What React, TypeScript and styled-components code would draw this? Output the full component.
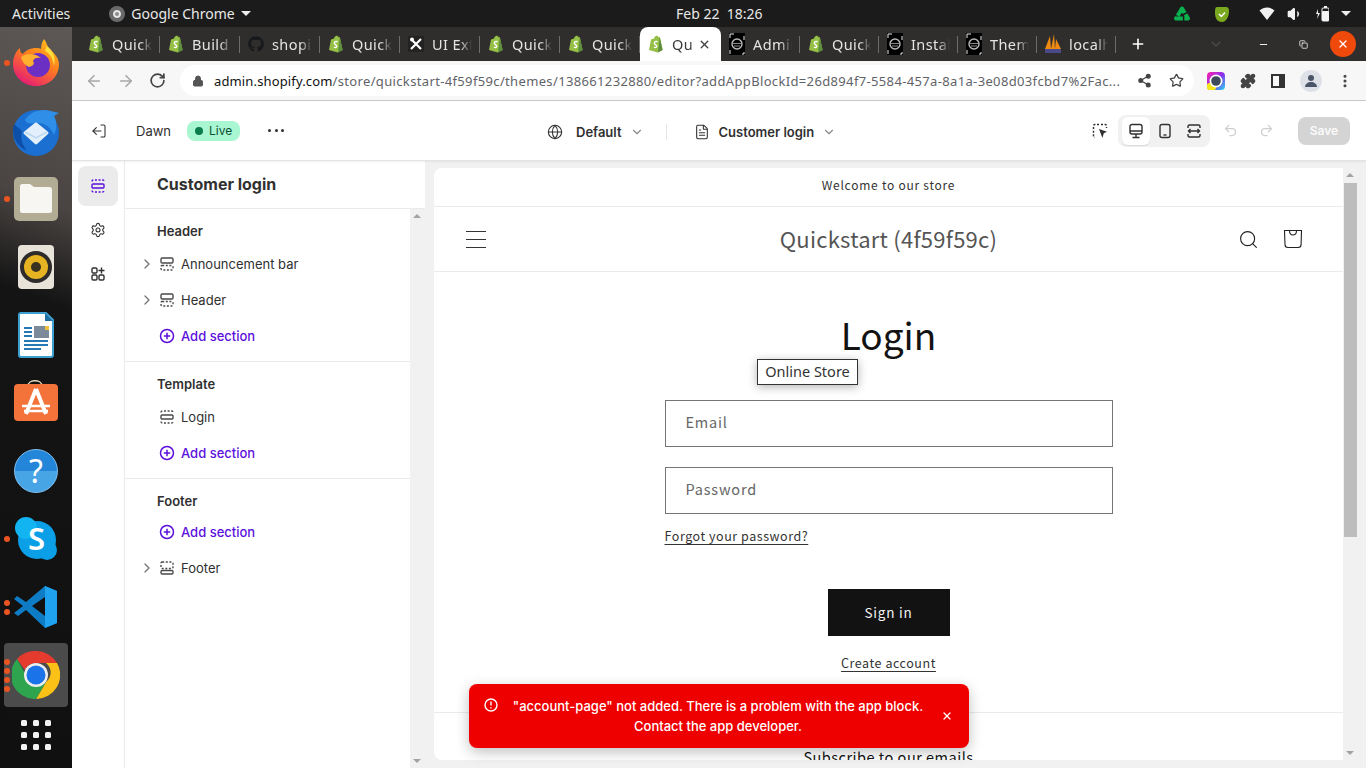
import React from 'react';
import styled, { createGlobalStyle } from 'styled-components';
import { FaGithub } from 'react-icons/fa';
import {
  ArrowLeft,
  ArrowRight,
  ChevronDown,
  ChevronRight,
  Copy,
  EllipsisVertical,
  FileText,
  Globe,
  Lock,
  LogOut,
  Minus,
  Plus,
  Puzzle,
  Redo2,
  RotateCw,
  Search,
  Settings,
  Share2,
  Star,
  Undo2,
  Volume1,
  X,
} from 'lucide-react';

type SectionKind = 'top' | 'middle' | 'bottom';

const GlobalStyle = createGlobalStyle`
  html, body { margin: 0; padding: 0; overflow: hidden; }
  * { box-sizing: border-box; }
  body { font-family: 'Inter', 'Liberation Sans', sans-serif; }
`;

const UBUNTU = `'Noto Sans', 'Open Sans', sans-serif`;
const STORE = `'Noto Sans CJK JP', 'Noto Sans', sans-serif`;

const ShopifyIcon = () => (
  <svg width='16' height='18' viewBox='0 0 16 18'>
    <path d='M1 15 3 4.5 6 3.4C6.6 1.6 7.6.8 8.6.8c1 0 1.6.7 2 1.4l1.2-.2L14.6 15 9.6 17.4Z' fill='#95bf47' />
    <path d='M11.8 2 14.6 15 10 17.4Z' fill='#5e8e3e' />
    <path d='M9.6 6.7C8 6 6.2 6.8 6.4 8.3c.2 1.4 2.4 1.6 2.4 3 0 1.2-1.6 1.5-2.8.8' fill='none' stroke='#fff' strokeWidth='1.4' />
  </svg>
);

const ThemeFavicon = () => (
  <svg width='16' height='22' viewBox='0 0 16 22'>
    <rect width='16' height='22' fill='#000' />
    <path d='M1 1h14v20H1Z' fill='none' stroke='#e8e8e8' strokeWidth='1' strokeDasharray='4 12' />
    <circle cx='8' cy='11' r='5' fill='none' stroke='#bbb' strokeWidth='1.4' />
    <path d='M4 10.5h8M5 13h6' stroke='#888' strokeWidth='1.2' />
  </svg>
);

const ToolsFavicon = () => (
  <svg width='16' height='16' viewBox='0 0 16 16'>
    <rect width='16' height='16' fill='#222' />
    <path d='M3 3l10 10M13 3 3 13' stroke='#fff' strokeWidth='2.2' />
    <circle cx='4' cy='3.5' r='2' fill='#fff' />
  </svg>
);

const LocalFavicon = () => (
  <svg width='16' height='20' viewBox='0 0 16 20'>
    <path d='M0 15 5 2l1 13ZM6 15 9 0l1 15ZM10 15l1-10 5 10Z' fill='#ee8a12' />
    <rect y='15' width='16' height='4' fill='#4a4a8a' />
  </svg>
);

const tabs: { label: string; icon: React.ReactNode; active?: boolean; narrow?: boolean }[] = [
  { label: 'Quick', icon: <ShopifyIcon /> },
  { label: 'Build', icon: <ShopifyIcon /> },
  { label: 'shopify', icon: <FaGithub size={16} color='#17191c' /> },
  { label: 'Quick', icon: <ShopifyIcon /> },
  { label: 'UI Ext', icon: <ToolsFavicon /> },
  { label: 'Quick', icon: <ShopifyIcon /> },
  { label: 'Quick', icon: <ShopifyIcon /> },
  { label: 'Qu', icon: <ShopifyIcon />, active: true },
  { label: 'Admin', icon: <ThemeFavicon />, narrow: true },
  { label: 'Quick', icon: <ShopifyIcon />, narrow: true },
  { label: 'Install', icon: <ThemeFavicon />, narrow: true },
  { label: 'Theme', icon: <ThemeFavicon />, narrow: true },
  { label: 'localhost', icon: <LocalFavicon />, narrow: true },
];

const FirefoxIcon = () => (
  <svg width='50' height='50' viewBox='0 0 50 50'>
    <defs>
      <linearGradient id='ffBody' x1='0.8' y1='0' x2='0.2' y2='1'>
        <stop offset='0' stopColor='#ffc11d' />
        <stop offset='0.45' stopColor='#ff7a20' />
        <stop offset='1' stopColor='#e3137d' />
      </linearGradient>
    </defs>
    <path d='M33 1c3 4 3 7 5 9 5 5 10 10 10 16 0 13-10 22-23 22S2 38 2 26C2 18 6 12 9 10c0 4 1 5 3 6 3-4 8-6 13-6 2 0 4 0 5 1 0-4 1-7 3-10Z' fill='url(#ffBody)' />
    <circle cx='27' cy='27' r='12' fill='#6b2fc4' />
    <path d='M10 19c5-4 14-4 20 1-4-1-7 0-8 3 2 3 0 5-4 6-4-2-7-5-8-10Z' fill='#ffb02e' />
    <path d='M36 8c6 5 9 12 7 20-1-7-3-12-9-15Z' fill='#ffdf3c' />
  </svg>
);

const ThunderbirdIcon = () => (
  <svg width='50' height='50' viewBox='0 0 50 50'>
    <circle cx='25' cy='27' r='23' fill='#1a6fd1' />
    <path d='M14 14c5-9 17-12 26-9l8 2-5 3c3 5 3 13 0 19-3-8-11-13-19-12-4 0-7 2-10-3Z' fill='#2f8fe8' />
    <path d='M3 18c-3 10 1 21 13 27-5-7-7-13-5-20Z' fill='#0d4fa8' />
    <path d='M14 27l11-9 11 9-11 10Z' fill='#e3effb' stroke='#e3effb' strokeWidth='3' strokeLinejoin='round' />
    <path d='M14 26l11 6 11-6' fill='none' stroke='#b9d6f3' strokeWidth='1.5' />
  </svg>
);

const FilesIcon = () => (
  <svg width='46' height='46' viewBox='0 0 46 46'>
    <rect x='1' y='1' width='44' height='44' rx='5' fill='#b3ac95' />
    <path d='M7 10c0-1 1-2 2-2h8l4 3h15c2 0 3 1 3 3v21c0 1-1 2-3 2H9c-1 0-2-1-2-2Z' fill='#f8f6f3' />
  </svg>
);

const RhythmboxIcon = () => (
  <svg width='38' height='46' viewBox='0 0 38 46'>
    <rect x='1' y='1' width='36' height='44' rx='4' fill='#e7e3d8' />
    <circle cx='19' cy='23' r='16' fill='#2e2c2b' />
    <circle cx='19' cy='23' r='12' fill='#e6b422' />
    <circle cx='19' cy='23' r='5' fill='#3a3220' />
  </svg>
);

const WriterIcon = () => (
  <svg width='38' height='46' viewBox='0 0 38 46'>
    <path d='M2 3c0-1 1-2 2-2h25l7 7v35c0 1-1 2-2 2H4c-1 0-2-1-2-2Z' fill='#fff' stroke='#3f9fd0' strokeWidth='2' />
    <path d='M28 1l8 8h-8Z' fill='#1d6f9f' />
    <path d='M7 16h8M7 20h8M7 24h8M7 29h24M7 33h24M7 37h17' stroke='#2678b4' strokeWidth='2' />
    <rect x='17' y='14' width='15' height='12' fill='#7d8a99' />
    <rect x='28' y='14' width='4' height='4' fill='#f0c040' />
  </svg>
);

const StoreIcon = () => (
  <svg width='46' height='46' viewBox='0 3 46 46'>
    <path d='M15 9c0-7 14-7 14 0' fill='none' stroke='#e6d4b8' strokeWidth='1.6' />
    <rect x='1' y='7' width='44' height='37' rx='4' fill='#f3733a' />
    <path d='M23 12 13 37M23 12l10 25' stroke='#fff' strokeWidth='4' fill='none' />
    <path d='M9 29h28M11 34h24' stroke='#fff' strokeWidth='2.4' />
  </svg>
);

const HelpIcon = () => <HelpBall>?</HelpBall>;

const SkypeIcon = () => (
  <SkypeBall>
    <svg width='44' height='44' viewBox='0 0 44 44' fill='#0a9fe6'>
      <circle cx='23' cy='23' r='19' />
      <circle cx='12' cy='11' r='11' fill='#12b4f2' />
      <circle cx='33' cy='33' r='10' />
    </svg>
    <SkypeLetter>S</SkypeLetter>
  </SkypeBall>
);

const ChromeIcon = () => (
  <svg width='48' height='48' viewBox='0 0 48 48'>
    <path d='M24 0a24 24 0 0 1 21 12H24a12 12 0 0 0-11 7L5 8a24 24 0 0 1 19-8Z' fill='#e53a2e' />
    <path d='M45 12a24 24 0 0 1-21 36l10-17a12 12 0 0 0 0-19Z' fill='#fbc116' />
    <path d='M5 8l9 16a12 12 0 0 0 20 7L24 48A24 24 0 0 1 5 8Z' fill='#2ea44f' />
    <circle cx='24' cy='24' r='12' fill='#eee' />
    <circle cx='24' cy='24' r='9.5' fill='#1a73e8' />
  </svg>
);

const VsCodeIcon = () => (
  <svg width='44' height='44' viewBox='0 0 44 44'>
    <path d='M31 1 43 6v32l-12 5L12 25 4 31 0 28l9-7-9-7 3-3 9 6Z' fill='#0d7cc4' />
    <path d='M31 1 43 6v32l-12 5Z' fill='#1fa3f0' />
    <path d='M31 12 18 21l13 10Z' fill='#111' />
  </svg>
);

const GridIcon = () => (
  <svg width='30' height='30' viewBox='0 0 30 30'>
    {[0, 12, 24].map((y) =>
      [0, 12, 24].map((x) => <rect key={`${x}-${y}`} x={x} y={y} width='6' height='6' rx='1.5' fill='#f2f2f2' />),
    )}
  </svg>
);

const dockItems: { icon: React.ReactNode; dots: number; active?: boolean; short?: boolean }[] = [
  { icon: <FirefoxIcon />, dots: 1 },
  { icon: <ThunderbirdIcon />, dots: 0 },
  { icon: <FilesIcon />, dots: 1 },
  { icon: <RhythmboxIcon />, dots: 0 },
  { icon: <WriterIcon />, dots: 0 },
  { icon: <StoreIcon />, dots: 0 },
  { icon: <HelpIcon />, dots: 0 },
  { icon: <SkypeIcon />, dots: 1 },
  { icon: <VsCodeIcon />, dots: 2 },
  { icon: <ChromeIcon />, dots: 4, active: true },
  { icon: <GridIcon />, dots: 0, short: true },
];

// admin section glyph, the solid band moves with the kind of section
const SectionIcon = ({ kind, color = '#4a4a4a' }: { kind: SectionKind; color?: string }) => (
  <svg width='16' height='16' viewBox='0 0 16 16' fill='none' stroke={color} strokeWidth='1.4'>
    {kind === 'top' && (
      <>
        <rect x='2' y='2' width='12' height='5' rx='1.2' />
        <rect x='2' y='9.5' width='12' height='4.5' rx='1.2' strokeDasharray='2 1.6' />
      </>
    )}
    {kind === 'middle' && (
      <>
        <path d='M2 3.5c0-1 .5-1.5 1.5-1.5h9c1 0 1.5.5 1.5 1.5' strokeDasharray='2 1.6' />
        <rect x='2' y='6' width='12' height='4' rx='1' />
        <path d='M2 12.5c0 1 .5 1.5 1.5 1.5h9c1 0 1.5-.5 1.5-1.5' strokeDasharray='2 1.6' />
      </>
    )}
    {kind === 'bottom' && (
      <>
        <rect x='2' y='2' width='12' height='6.5' rx='1.2' strokeDasharray='2 1.6' />
        <rect x='2' y='10.5' width='12' height='3.5' rx='1.2' />
      </>
    )}
  </svg>
);

const AddIcon = () => (
  <svg width='16' height='16' viewBox='0 0 16 16' fill='none' stroke='#5c10dc' strokeWidth='1.5'>
    <circle cx='8' cy='8' r='6.5' />
    <path d='M8 4.8v6.4M4.8 8h6.4' />
  </svg>
);

const AppsIcon = () => (
  <svg width='16' height='16' viewBox='0 0 16 16' fill='none' stroke='#303030' strokeWidth='1.4'>
    <rect x='2' y='2' width='5' height='5' rx='1.2' />
    <rect x='2' y='9' width='5' height='5' rx='1.2' />
    <rect x='9' y='9' width='5' height='5' rx='1.2' />
    <path d='M11.5 1.5v6M8.5 4.5h6' />
  </svg>
);

const InspectIcon = () => (
  <svg width='16' height='16' viewBox='0 0 16 16' fill='none'>
    <path d='M7 1.5H3c-1 0-1.5.5-1.5 1.5v10c0 1 .5 1.5 1.5 1.5M9 1.5h4c1 0 1.5.5 1.5 1.5v2' stroke='#303030' strokeWidth='1.4' strokeDasharray='2 1.6' />
    <path d='M7 6l8 2.8-3.2 1.4L10.4 15Z' fill='#303030' />
  </svg>
);

const DesktopIcon = () => (
  <svg width='16' height='16' viewBox='0 0 16 16' fill='none' stroke='#303030' strokeWidth='1.4'>
    <rect x='2' y='1.5' width='12' height='9.5' rx='2' />
    <path d='M2 8h12M8 11v3M4.5 14.5h7' />
  </svg>
);

const MobileIcon = () => (
  <svg width='16' height='16' viewBox='0 0 16 16' fill='none' stroke='#303030' strokeWidth='1.4'>
    <rect x='3' y='1.5' width='10' height='13' rx='2' />
    <path d='M6.5 12h3' />
  </svg>
);

const FullIcon = () => (
  <svg width='16' height='16' viewBox='0 0 16 16' fill='none' stroke='#303030' strokeWidth='1.4'>
    <path d='M2 5V3.5c0-1 .5-1.5 1.5-1.5h9c1 0 1.5.5 1.5 1.5V5M2 11v1.5c0 1 .5 1.5 1.5 1.5h9c1 0 1.5-.5 1.5-1.5V11' />
    <path d='M2 8h12M4.5 6 2.5 8l2 2M11.5 6l2 2-2 2' />
  </svg>
);

const CartIcon = () => (
  <svg width='20' height='20' viewBox='0 0 20 20' fill='none' stroke='#222' strokeWidth='1.1'>
    <path d='M1.5 1.5h17l-.4 14c0 2-1 3-3 3H5c-2 0-3-1-3-3Z' />
    <path d='M6.5 1.5c0 6 7 6 7 0' />
  </svg>
);

const ColorExtIcon = () => (
  <svg width='18' height='18' viewBox='0 0 18 18'>
    <defs>
      <linearGradient id='extRing' x1='0' y1='0' x2='1' y2='1'>
        <stop offset='0' stopColor='#ff1fa8' />
        <stop offset='0.5' stopColor='#8a2ff0' />
        <stop offset='1' stopColor='#25d6f0' />
      </linearGradient>
    </defs>
    <rect width='18' height='18' rx='4' fill='url(#extRing)' />
    <rect x='0' y='11' width='9' height='7' rx='2' fill='#f3e61c' />
    <circle cx='9' cy='9' r='6.5' fill='#fff' />
    <circle cx='9' cy='9' r='4.8' fill='#3d4a5c' />
  </svg>
);

const App = () => (
  <Screen>
    <GlobalStyle />
    <TopBar>
      <TopLeft>
        <span>Activities</span>
        <AppMenu>
          <ChromeGlyph />
          Google Chrome
          <Caret />
        </AppMenu>
      </TopLeft>
      <Clock>Feb 22&nbsp;&nbsp;18:26</Clock>
      <Tray>
        <svg width='18' height='18' viewBox='0 0 18 18' fill='none' stroke='#0bb04f' strokeWidth='4'>
          <path d='M9 3.5 3 13.5h12Z' strokeLinejoin='round' strokeDasharray='8.5 1.5' />
        </svg>
        <svg width='14' height='16' viewBox='0 0 14 16'>
          <path d='M2 1h9c2 0 3 1 3 4 0 6-3 11-7 11-5 0-7-4-7-9 0-3 0-6 2-6Z' fill='#7aa81e' />
          <path d='M4 8l2.4 2.4L10 6.4' stroke='#fff' strokeWidth='1.5' fill='none' />
        </svg>
        <TrayGroup>
          <svg width='16' height='14' viewBox='0 0 16 14' fill='none'>
            <path d='M0.5 3.5C5 -0.5 11 -0.5 15.5 3.5L8 13Z' fill='#f2f2f2' />
          </svg>
          <Volume1 size={16} color='#f2f2f2' fill='#f2f2f2' />
          <svg width='14' height='16' viewBox='0 0 14 16' fill='none'>
            <path d='M3 3 1 8h2l-1 5 3-6H3Z' fill='#f2f2f2' />
            <rect x='7' y='2' width='7' height='13' rx='1' stroke='#f2f2f2' />
            <rect x='7' y='5' width='7' height='10' rx='1' fill='#f2f2f2' />
            <rect x='9' y='0' width='3' height='2' fill='#f2f2f2' />
          </svg>
          <Caret />
        </TrayGroup>
      </Tray>
    </TopBar>
    <Desktop>
      <Dock>
        {dockItems.map((item, i) => (
          <DockItem key={i} $active={item.active} $short={item.short}>
            {item.dots > 0 && (
              <DockDots>
                {Array.from({ length: item.dots }).map((_, d) => (
                  <DockDot key={d} />
                ))}
              </DockDots>
            )}
            {item.icon}
          </DockItem>
        ))}
      </Dock>
      <Browser>
        <TabStrip>
          {tabs.map((tab, i) => (
            <Tab key={i} $active={tab.active} $narrow={tab.narrow}>
              <Favicon>{tab.icon}</Favicon>
              <TabLabel $active={tab.active}>{tab.label}</TabLabel>
              {tab.active && <X size={13} color='#444' strokeWidth={2.6} />}
            </Tab>
          ))}
          <NewTab>
            <Plus size={16} color='#fff' strokeWidth={2.4} />
          </NewTab>
          <WindowControls>
            <TabSearch>
              <ChevronDown size={16} color='#4a4a4a' />
            </TabSearch>
            <WindowButton>
              <Minus size={11} color='#fff' />
            </WindowButton>
            <WindowButton>
              <Copy size={9} color='#fff' />
            </WindowButton>
            <CloseButton>
              <X size={12} color='#fff' strokeWidth={2.6} />
            </CloseButton>
          </WindowControls>
        </TabStrip>
        <UrlBar>
          <NavButtons>
            <ArrowLeft size={18} color='#a8a8a8' strokeWidth={2.2} />
            <ArrowRight size={18} color='#a8a8a8' strokeWidth={2.2} />
            <RotateCw size={17} color='#444' strokeWidth={2.4} />
          </NavButtons>
          <Omnibox>
            <Lock size={12} color='#555' fill='#555' />
            <UrlText>
              <strong>admin.shopify.com</strong>/store/quickstart-4f59f59c/themes/138661232880/editor?addAppBlockId=26d894f7-5584-457a-8a1a-3e08d03fcbd7%2Fac...
            </UrlText>
            <Share2 size={15} color='#444' fill='#444' />
            <Star size={15} color='#444' strokeWidth={2} />
          </Omnibox>
          <ExtButtons>
            <ColorExtIcon />
            <Puzzle size={16} color='#444' fill='#444' />
            <PanelGlyph />
            <Avatar>
              <svg width='14' height='14' viewBox='0 0 14 14'>
                <circle cx='7' cy='4' r='3' fill='#4a5568' />
                <path d='M1 13c0-3 3-5 6-5s6 2 6 5Z' fill='#4a5568' />
              </svg>
            </Avatar>
            <EllipsisVertical size={16} color='#444' strokeWidth={2.6} />
          </ExtButtons>
        </UrlBar>
        <EditorBar>
          <EditorLeft>
            <ExitIcon>
              <LogOut size={16} color='#303030' strokeWidth={1.6} />
            </ExitIcon>
            <ThemeName>Dawn</ThemeName>
            <LivePill>
              <LiveDot />
              Live
            </LivePill>
            <MoreDots>
              <i />
              <i />
              <i />
            </MoreDots>
          </EditorLeft>
          <EditorCenter>
            <Globe size={16} color='#303030' strokeWidth={1.6} />
            <PickerText>Default</PickerText>
            <ChevronDown size={14} color='#8a8a8a' />
            <PickerDivider />
            <FileText size={16} color='#303030' strokeWidth={1.6} />
            <PickerText $near>Customer login</PickerText>
            <ChevronDown size={14} color='#8a8a8a' />
          </EditorCenter>
          <EditorRight>
            <InspectIcon />
            <DeviceGroup>
              <DeviceButton $active>
                <DesktopIcon />
              </DeviceButton>
              <DeviceButton>
                <MobileIcon />
              </DeviceButton>
              <DeviceButton>
                <FullIcon />
              </DeviceButton>
            </DeviceGroup>
            <HistoryButtons>
              <Undo2 size={15} color='#cfcfcf' />
              <Redo2 size={15} color='#cfcfcf' />
            </HistoryButtons>
            <SaveButton>Save</SaveButton>
          </EditorRight>
        </EditorBar>
        <Workspace>
          <Rail>
            <RailButton $active>
              <SectionIcon kind='middle' color='#5c10dc' />
            </RailButton>
            <RailButton>
              <Settings size={16} color='#303030' strokeWidth={1.6} />
            </RailButton>
            <RailButton>
              <AppsIcon />
            </RailButton>
          </Rail>
          <Panel>
            <PanelTitle>Customer login</PanelTitle>
            <PanelBody>
              <SectionList>
                <Section>
                  <SectionLabel>Header</SectionLabel>
                  <Row>
                    <RowChevron size={16} color='#777' />
                    <SectionIcon kind='top' />
                    <RowText>Announcement bar</RowText>
                  </Row>
                  <Row>
                    <RowChevron size={16} color='#777' />
                    <SectionIcon kind='top' />
                    <RowText>Header</RowText>
                  </Row>
                  <Row>
                    <span />
                    <AddIcon />
                    <AddText>Add section</AddText>
                  </Row>
                </Section>
                <Section>
                  <SectionLabel>Template</SectionLabel>
                  <Row>
                    <span />
                    <SectionIcon kind='middle' />
                    <RowText>Login</RowText>
                  </Row>
                  <Row>
                    <span />
                    <AddIcon />
                    <AddText>Add section</AddText>
                  </Row>
                </Section>
                <Section $last>
                  <SectionLabel $tight>Footer</SectionLabel>
                  <Row>
                    <span />
                    <AddIcon />
                    <AddText>Add section</AddText>
                  </Row>
                  <Row>
                    <RowChevron size={16} color='#777' />
                    <SectionIcon kind='bottom' />
                    <RowText>Footer</RowText>
                  </Row>
                </Section>
              </SectionList>
              <Scrollbar>
                <ScrollUp />
                <ScrollDown />
              </Scrollbar>
            </PanelBody>
          </Panel>
          <Preview>
            <StoreCard>
              <Store>
                <Announcement>Welcome to our store</Announcement>
                <StoreHeader>
                  <MenuLines>
                    <i />
                    <i />
                    <i />
                  </MenuLines>
                  <StoreName>Quickstart (4f59f59c)</StoreName>
                  <StoreActions>
                    <Search size={21} color='#222' strokeWidth={1.3} />
                    <CartIcon />
                  </StoreActions>
                </StoreHeader>
                <LoginTitle>Login</LoginTitle>
                <Field>Email</Field>
                <Field>Password</Field>
                <ForgotRow>
                  <StoreLink>Forgot your password?</StoreLink>
                </ForgotRow>
                <SignIn>Sign in</SignIn>
                <CreateAccount>Create account</CreateAccount>
                <FooterLine />
                <Subscribe>Subscribe to our emails</Subscribe>
              </Store>
              <StoreScroll>
                <ScrollUp />
                <ScrollThumb />
                <ScrollDown />
              </StoreScroll>
            </StoreCard>
          </Preview>
        </Workspace>
      </Browser>
    </Desktop>
    <Tooltip>Online Store</Tooltip>
    <Toast>
      <svg width='14' height='14' viewBox='0 0 14 14' fill='none' stroke='#fff' strokeWidth='1.4'>
        <circle cx='7' cy='7' r='6' />
        <path d='M7 3.5v4M7 9.2v1.4' />
      </svg>
      <ToastText>
        "account-page" not added. There is a problem with the app block.
        <br />
        Contact the app developer.
      </ToastText>
      <X size={12} color='#fff' strokeWidth={2.4} />
    </Toast>
  </Screen>
);

const Screen = styled.div`
  position: relative;
  width: 1366px;
  height: 768px;
  overflow: hidden;
  display: flex;
  flex-direction: column;
`;

const TopBar = styled.header`
  height: 27px;
  flex: none;
  background: #1b1b1b;
  color: #e8e8e8;
  font-family: ${UBUNTU};
  font-size: 14px;
  display: grid;
  grid-template-columns: 664px auto 1fr;
  align-items: center;
  padding: 0 12px;
`;

const TopLeft = styled.div`
  display: flex;
  align-items: center;
  gap: 39px;
`;

const AppMenu = styled.div`
  display: flex;
  align-items: center;
  gap: 6px;
`;

const ChromeGlyph = styled.span`
  width: 16px;
  height: 16px;
  border-radius: 50%;
  background: #8a8a8a;
  border: 4px solid #6a6a6a;
  box-shadow: inset 0 0 0 2px #e8e8e8;
`;

const Caret = styled.span`
  width: 0;
  height: 0;
  border-left: 5px solid transparent;
  border-right: 5px solid transparent;
  border-top: 5px solid #eee;
`;

const Clock = styled.div`
  white-space: nowrap;
`;

const Tray = styled.div`
  display: flex;
  align-items: center;
  justify-content: flex-end;
  gap: 24px;
  padding-right: 3px;
`;

const TrayGroup = styled.div`
  display: flex;
  align-items: center;
  gap: 12px;
  margin-left: 6px;
`;

const Desktop = styled.div`
  flex: 1;
  min-height: 0;
  display: flex;
`;

const Dock = styled.aside`
  width: 72px;
  flex: none;
  padding-top: 2px;
  background: linear-gradient(200deg, #5d5856 0%, #4a4543 24%, #141414 37%, #101010 100%);
  display: flex;
  flex-direction: column;
`;

const DockItem = styled.div<{ $active?: boolean; $short?: boolean }>`
  position: relative;
  height: ${(p) => (p.$short ? 52 : 68)}px;
  flex: none;
  display: flex;
  align-items: center;
  justify-content: center;
  &::before {
    content: '';
    position: absolute;
    left: 4px;
    right: 4px;
    top: 2px;
    bottom: 2px;
    border-radius: 4px;
    background: ${(p) => (p.$active ? '#4b4b4b' : 'transparent')};
  }
  > svg {
    position: relative;
  }
`;

const DockDots = styled.div`
  position: absolute;
  left: 4px;
  top: 0;
  bottom: 0;
  display: flex;
  flex-direction: column;
  justify-content: center;
  gap: 3px;
`;

const DockDot = styled.span`
  width: 6px;
  height: 6px;
  border-radius: 50%;
  background: #e95420;
`;

const HelpBall = styled.div`
  width: 44px;
  height: 44px;
  border-radius: 50%;
  background: linear-gradient(#2486d8 50%, #47a5e6 50%);
  border: 1px solid #7fc0ee;
  color: #fff;
  font-family: ${UBUNTU};
  font-size: 32px;
  line-height: 42px;
  text-align: center;
`;

const SkypeBall = styled.div`
  position: relative;
  width: 44px;
  height: 44px;
`;

const SkypeLetter = styled.span`
  position: absolute;
  left: 1px;
  right: 0;
  top: 3px;
  text-align: center;
  color: #fff;
  font-family: ${UBUNTU};
  font-size: 31px;
  line-height: 36px;
  font-weight: 600;
`;

const Browser = styled.div`
  flex: 1;
  min-width: 0;
  display: flex;
  flex-direction: column;
  background: #fff;
`;

const TabStrip = styled.div`
  height: 34px;
  flex: none;
  background: #2f2e2d;
  display: flex;
  align-items: stretch;
  padding-left: 8px;
`;

const Tab = styled.div<{ $active?: boolean; $narrow?: boolean }>`
  position: relative;
  width: ${(p) => (p.$active ? 81 : p.$narrow ? 79 : 80)}px;
  flex: none;
  display: flex;
  align-items: center;
  padding: 0 ${(p) => (p.$active ? 10 : 8)}px 0 8px;
  background: ${(p) => (p.$active ? '#fff' : 'transparent')};
  border-radius: ${(p) => (p.$active ? '8px 8px 0 0' : '0')};
  &::after {
    content: '';
    display: ${(p) => (p.$active ? 'none' : 'block')};
    position: absolute;
    right: 0;
    top: 9px;
    bottom: 8px;
    width: 1px;
    background: #6c6c6c;
  }
`;

const Favicon = styled.span`
  width: 16px;
  height: 16px;
  flex: none;
  display: flex;
  align-items: center;
  justify-content: center;
`;

const TabLabel = styled.span<{ $active?: boolean }>`
  flex: 1;
  min-width: 0;
  margin-left: 8px;
  overflow: hidden;
  white-space: nowrap;
  font-family: ${UBUNTU};
  font-size: 14.5px;
  letter-spacing: 0.4px;
  color: ${(p) => (p.$active ? '#3a3a3a' : '#e4e4e4')};
  mask-image: linear-gradient(90deg, #000 70%, transparent 100%);
`;

const NewTab = styled.div`
  width: 44px;
  flex: none;
  display: flex;
  align-items: center;
  justify-content: center;
`;

const WindowControls = styled.div`
  margin-left: auto;
  display: flex;
  align-items: center;
  padding-right: 10px;
  gap: 14px;
`;

const TabSearch = styled.span`
  display: flex;
  margin-right: 12px;
`;

const WindowButton = styled.span`
  width: 26px;
  display: flex;
  justify-content: center;
`;

const CloseButton = styled.span`
  width: 26px;
  height: 26px;
  border-radius: 50%;
  background: #ef4a0c;
  display: flex;
  align-items: center;
  justify-content: center;
`;

const UrlBar = styled.div`
  height: 40px;
  flex: none;
  background: #f7f7f7;
  border-bottom: 1px solid #c9c9c9;
  display: flex;
  align-items: center;
`;

const NavButtons = styled.div`
  width: 108px;
  flex: none;
  padding-left: 13px;
  display: flex;
  align-items: center;
  gap: 14px;
`;

const Omnibox = styled.div`
  width: 1014px;
  height: 31px;
  flex: none;
  border-radius: 16px;
  background: #fff;
  display: flex;
  align-items: center;
  gap: 17px;
  padding: 0 10px 0 12px;
`;

const UrlText = styled.div`
  flex: 1;
  min-width: 0;
  margin-left: -7px;
  overflow: hidden;
  white-space: nowrap;
  font-family: ${UBUNTU};
  font-size: 13px;
  letter-spacing: 0.35px;
  color: #5f6368;
  strong {
    font-weight: 400;
    letter-spacing: 0.14px;
    color: #111;
  }
`;

const ExtButtons = styled.div`
  flex: 1;
  display: flex;
  align-items: center;
  justify-content: space-between;
  padding: 0 13px 0 13px;
`;

const PanelGlyph = styled.span`
  width: 14px;
  height: 14px;
  border: 2px solid #333;
  border-right-width: 6px;
`;

const Avatar = styled.span`
  width: 22px;
  height: 22px;
  border-radius: 50%;
  background: #dee1e8;
  display: flex;
  align-items: center;
  justify-content: center;
`;

const EditorBar = styled.div`
  height: 60px;
  flex: none;
  background: #fff;
  border-bottom: 1px solid #e3e3e3;
  box-shadow: 0 1px 2px rgba(0, 0, 0, 0.06);
  position: relative;
  z-index: 1;
  display: flex;
  align-items: center;
`;

const EditorLeft = styled.div`
  width: 475px;
  flex: none;
  padding-left: 19px;
  display: flex;
  align-items: center;
`;

const ExitIcon = styled.span`
  display: flex;
  transform: scaleX(-1);
`;

const ThemeName = styled.span`
  margin-left: 29px;
  font-size: 13px;
  color: #303030;
`;

const LivePill = styled.span`
  margin-left: 16px;
  height: 20px;
  padding: 0 8px;
  border-radius: 8px;
  background: #a9f6d2;
  color: #0c5132;
  font-size: 12px;
  display: flex;
  align-items: center;
  gap: 6px;
`;

const LiveDot = styled.i`
  width: 8px;
  height: 8px;
  border-radius: 50%;
  background: #0a7d4a;
`;

const MoreDots = styled.span`
  margin-left: 28px;
  width: 16px;
  display: flex;
  justify-content: space-between;
  i {
    width: 3px;
    height: 3px;
    border-radius: 50%;
    background: #303030;
  }
`;

const EditorCenter = styled.div`
  padding-top: 2px;
  display: flex;
  align-items: center;
`;

const PickerText = styled.span<{ $near?: boolean }>`
  margin: 0 8px 0 ${(p) => (p.$near ? 9 : 13)}px;
  font-size: 13px;
  font-weight: 600;
  color: #303030;
`;

const PickerDivider = styled.span`
  width: 1px;
  height: 16px;
  background: #e6e6e6;
  margin: 0 27px 0 22px;
`;

const EditorRight = styled.div`
  margin-left: auto;
  padding-right: 16px;
  display: flex;
  align-items: center;
`;

const DeviceGroup = styled.div`
  margin-left: 10px;
  width: 92px;
  height: 32px;
  padding: 2px 4px;
  border-radius: 8px;
  background: #f1f1f1;
  display: flex;
  gap: 1px;
`;

const DeviceButton = styled.span<{ $active?: boolean }>`
  width: 28px;
  flex: none;
  border-radius: 6px;
  background: ${(p) => (p.$active ? '#fff' : 'transparent')};
  box-shadow: ${(p) => (p.$active ? '0 1px 1px rgba(0,0,0,0.1)' : 'none')};
  display: flex;
  align-items: center;
  justify-content: center;
`;

const HistoryButtons = styled.div`
  margin: 0 24px 0 13px;
  display: flex;
  gap: 21px;
`;

const SaveButton = styled.span`
  width: 52px;
  height: 28px;
  border-radius: 8px;
  background: #d4d4d4;
  color: #fbfbfb;
  font-size: 12px;
  font-weight: 600;
  display: flex;
  align-items: center;
  justify-content: center;
`;

const Workspace = styled.div`
  flex: 1;
  min-height: 0;
  display: flex;
`;

const Rail = styled.nav`
  width: 53px;
  flex: none;
  border-right: 1px solid #ebebeb;
  padding: 5px 6px 0;
  display: flex;
  flex-direction: column;
  gap: 4px;
`;

const RailButton = styled.span<{ $active?: boolean }>`
  width: 40px;
  height: 40px;
  border-radius: 8px;
  background: ${(p) => (p.$active ? '#ebebeb' : 'transparent')};
  display: flex;
  align-items: center;
  justify-content: center;
`;

const Panel = styled.section`
  width: 300px;
  flex: none;
  display: flex;
  flex-direction: column;
`;

const PanelTitle = styled.h2`
  height: 48px;
  flex: none;
  margin: 0;
  padding: 0 0 2px 32px;
  border-bottom: 1px solid #ebebeb;
  display: flex;
  align-items: center;
  font-size: 16px;
  font-weight: 650;
  color: #303030;
`;

const PanelBody = styled.div`
  flex: 1;
  min-height: 0;
  display: flex;
`;

const SectionList = styled.div`
  flex: 1;
  min-width: 0;
`;

const Section = styled.div<{ $last?: boolean }>`
  padding: 12px 0 7px;
  border-bottom: ${(p) => (p.$last ? 'none' : '1px solid #ebebeb')};
`;

const SectionLabel = styled.h3<{ $tight?: boolean }>`
  margin: 0 0 ${(p) => (p.$tight ? 3 : 5)}px;
  padding-left: 32px;
  font-size: 13px;
  line-height: 20px;
  font-weight: 600;
  color: #303030;
`;

const Row = styled.div`
  height: 36px;
  padding-left: 16px;
  display: grid;
  grid-template-columns: 12px 16px 1fr;
  column-gap: 6px;
  align-items: center;
`;

const RowChevron = styled(ChevronRight)`
  margin-left: -2px;
`;

const RowText = styled.span`
  font-size: 13px;
  color: #303030;
`;

const AddText = styled.span`
  font-size: 13px;
  font-weight: 500;
  color: #5c10dc;
`;

const Scrollbar = styled.div`
  position: relative;
  width: 15px;
  flex: none;
  background: #f1f1f1;
`;

const ScrollUp = styled.span`
  position: absolute;
  top: 5px;
  left: 3px;
  width: 0;
  height: 0;
  border-left: 4px solid transparent;
  border-right: 4px solid transparent;
  border-bottom: 4px solid #a3a3a3;
`;

const ScrollDown = styled.span`
  position: absolute;
  bottom: 5px;
  left: 3px;
  width: 0;
  height: 0;
  border-left: 4px solid transparent;
  border-right: 4px solid transparent;
  border-top: 4px solid #a3a3a3;
`;

const Preview = styled.main`
  flex: 1;
  min-width: 0;
  background: #f1f1f1;
  padding: 7px 8px 8px 9px;
`;

const StoreCard = styled.div`
  height: 100%;
  border-radius: 8px;
  overflow: hidden;
  background: #fff;
  display: flex;
`;

const Store = styled.div`
  flex: 1;
  min-width: 0;
  overflow: hidden;
  font-family: ${STORE};
  color: #121212;
  display: flex;
  flex-direction: column;
  align-items: center;
`;

const Announcement = styled.div`
  width: 100%;
  height: 39px;
  flex: none;
  padding-bottom: 6px;
  border-bottom: 1px solid #ebebeb;
  display: flex;
  align-items: center;
  justify-content: center;
  font-size: 12px;
  letter-spacing: 0.75px;
  color: #333;
`;

const StoreHeader = styled.div`
  width: 100%;
  height: 65px;
  flex: none;
  border-bottom: 1px solid #ebebeb;
  display: grid;
  grid-template-columns: 1fr auto 1fr;
  align-items: center;
  padding: 0 40px 0 32px;
`;

const MenuLines = styled.div`
  width: 20px;
  height: 17px;
  display: flex;
  flex-direction: column;
  justify-content: space-between;
  i {
    height: 1px;
    background: #333;
  }
`;

const StoreName = styled.div`
  margin-left: 8px;
  padding-bottom: 2px;
  font-size: 22px;
  letter-spacing: 0.25px;
  color: #555;
`;

const StoreActions = styled.div`
  display: flex;
  align-items: center;
  justify-content: flex-end;
  gap: 24px;
`;

const LoginTitle = styled.h1`
  margin: 38px 0 42px;
  height: 48px;
  flex: none;
  font-size: 37px;
  line-height: 48px;
  font-weight: 400;
  color: #121212;
`;

const Field = styled.div`
  width: 448px;
  height: 47px;
  flex: none;
  padding: 0 0 5px 20px;
  border: 1px solid #757575;
  display: flex;
  align-items: center;
  font-size: 14.5px;
  letter-spacing: 0.8px;
  color: #666;
  & + & {
    margin-top: 20px;
  }
`;

const ForgotRow = styled.div`
  width: 448px;
  flex: none;
  margin-top: 10px;
  line-height: 20px;
  height: 22px;
`;

const StoreLink = styled.span`
  font-size: 12.5px;
  letter-spacing: 0.55px;
  color: #333;
  text-decoration: underline;
  text-underline-offset: 3px;
`;

const SignIn = styled.div`
  width: 122px;
  height: 47px;
  flex: none;
  margin-top: 43px;
  padding-bottom: 1px;
  background: #121212;
  color: #f3f3f3;
  font-size: 13.5px;
  letter-spacing: 0.8px;
  display: flex;
  align-items: center;
  justify-content: center;
`;

const CreateAccount = styled(StoreLink)`
  flex: none;
  margin-top: 17px;
  line-height: 20px;
`;

const FooterLine = styled.div`
  width: 100%;
  height: 1px;
  flex: none;
  margin-top: 39px;
  background: #ebebeb;
`;

const Subscribe = styled.div`
  flex: none;
  margin-top: 32px;
  font-size: 14.5px;
  line-height: 24px;
  letter-spacing: 0.5px;
  color: #121212;
  white-space: nowrap;
`;

const StoreScroll = styled.div`
  position: relative;
  width: 15px;
  flex: none;
  background: #f1f1f1;
  padding: 15px 1px 0 1px;
`;

const ScrollThumb = styled.div`
  height: 354px;
  background: #bdbdbd;
`;

const Tooltip = styled.div`
  position: absolute;
  left: 757px;
  top: 359px;
  width: 101px;
  height: 26px;
  padding-bottom: 2px;
  background: #fff;
  border: 1px solid #333;
  box-shadow: 0 2px 10px rgba(0, 0, 0, 0.3);
  display: flex;
  align-items: center;
  justify-content: center;
  font-family: ${UBUNTU};
  font-size: 14.5px;
  color: #333;
  white-space: nowrap;
`;

const Toast = styled.div`
  position: absolute;
  left: 469px;
  top: 684px;
  width: 500px;
  height: 64px;
  border-radius: 8px;
  background: #ee0000;
  box-shadow: 0 4px 14px rgba(0, 0, 0, 0.25);
  color: #fff;
  display: flex;
  align-items: center;
  padding: 0 16px 0 15px;
  svg:first-child {
    align-self: flex-start;
    margin-top: 14px;
  }
`;

const ToastText = styled.div`
  flex: 1;
  margin: 0 17px 0 14px;
  text-align: center;
  font-size: 13px;
  font-weight: 500;
  line-height: 20px;
  white-space: nowrap;
`;

export default App;
